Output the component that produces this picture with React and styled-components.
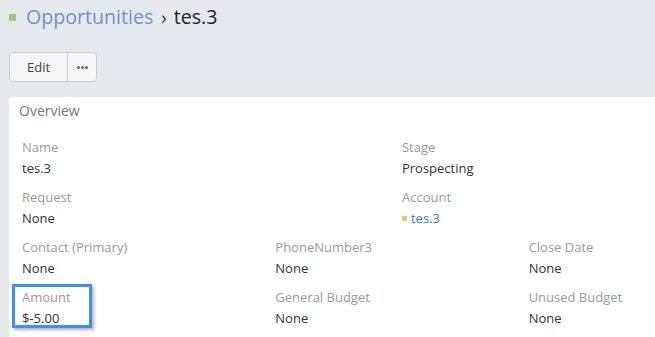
import React from 'react';
import styled, { createGlobalStyle } from 'styled-components';

const GlobalStyle = createGlobalStyle`
  html, body {
    margin: 0;
    padding: 0;
    background: #e6e9ec;
    overflow: hidden;
  }
  body {
    font-family: "Open Sans", "Liberation Sans", sans-serif;
    color: #333;
  }
`;

const Page = styled.div`
  padding: 4px 0 0 9px;
  width: 800px;
`;

const TitleBar = styled.h1`
  display: flex;
  align-items: center;
  margin: 0;
  height: 26px;
  font-size: 19.6px;
  font-weight: 400;
  line-height: 26px;
`;

const Marker = styled.span`
  display: inline-block;
  width: ${props => props.size}px;
  height: ${props => props.size}px;
  background: ${props => props.color};
  margin-right: ${props => props.gap}px;
  flex: none;
`;

const Crumb = styled.a`
  color: #6a93cf;
  text-decoration: none;
`;

const Sep = styled.span`
  color: #333;
  margin: 0 7px 0 8px;
  font-size: 18px;
`;

const Current = styled.span`
  color: #222;
`;

const Toolbar = styled.div`
  display: flex;
  margin-top: 22px;
`;

const ButtonGroup = styled.div`
  display: flex;
  height: 30px;
  border: 1px solid #c9cbcd;
  border-radius: 4px;
  background: #f6f6f6;
  box-sizing: border-box;
  overflow: hidden;
`;

const Button = styled.button`
  display: flex;
  align-items: center;
  justify-content: center;
  width: ${props => props.width}px;
  height: 100%;
  padding: 0;
  border: none;
  border-left: ${props => (props.divider ? '1px solid #c9cbcd' : 'none')};
  background: transparent;
  font-family: inherit;
  font-size: 13px;
  color: #444;
`;

const Dots = styled.span`
  display: flex;
  gap: 1px;
  span {
    width: 3px;
    height: 3px;
    border-radius: 50%;
    background: #666;
  }
`;

const Panel = styled.section`
  margin-top: 15px;
  width: 790px;
  background: #fff;
  border-radius: 4px 0 0 0;
  padding-bottom: 20px;
`;

const PanelTitle = styled.div`
  padding: 4px 10px 0;
  font-size: 14px;
  line-height: 20px;
  color: #777;
`;

const FieldGrid = styled.div`
  display: grid;
  grid-template-columns: repeat(6, 126.666px);
  row-gap: 9px;
  margin-top: 16px;
  padding: 0 3px;
`;

const Field = styled.div`
  position: relative;
  grid-column: span ${props => props.span};
  padding-left: 10px;

  ${props =>
    props.highlighted &&
    `
    &::after {
      content: '';
      position: absolute;
      left: 0;
      top: -3px;
      width: 80px;
      height: 44px;
      box-sizing: border-box;
      border: 3px solid #3f8ff0;
      box-shadow: 2px 2px 3px rgba(0, 0, 0, 0.3);
      pointer-events: none;
    }
  `}
`;

const Label = styled.div`
  font-size: 13px;
  line-height: 20px;
  color: #9a9a9a;
`;

const Value = styled.div`
  display: flex;
  align-items: center;
  margin-top: 1px;
  font-size: 13px;
  line-height: 20px;
  color: ${props => (props.link ? '#3b7fc4' : '#333')};
`;

const fields = [
  { label: 'Name', value: 'tes.3', span: 3 },
  { label: 'Stage', value: 'Prospecting', span: 3 },
  { label: 'Request', value: 'None', span: 3 },
  { label: 'Account', value: 'tes.3', span: 3, link: true },
  { label: 'Contact (Primary)', value: 'None', span: 2 },
  { label: 'PhoneNumber3', value: 'None', span: 2 },
  { label: 'Close Date', value: 'None', span: 2 },
  { label: 'Amount', value: '$-5.00', span: 2, highlighted: true },
  { label: 'General Budget', value: 'None', span: 2 },
  { label: 'Unused Budget', value: 'None', span: 2 },
];

const App = () => {
  return (
    <>
      <GlobalStyle />
      <Page>
        <TitleBar>
          <Marker size={7} color="#9bcb7b" gap={10} />
          <Crumb href="#">Opportunities</Crumb>
          <Sep>›</Sep>
          <Current>tes.3</Current>
        </TitleBar>

        <Toolbar>
          <ButtonGroup>
            <Button width={57}>Edit</Button>
            <Button width={29} divider>
              <Dots>
                <span />
                <span />
                <span />
              </Dots>
            </Button>
          </ButtonGroup>
        </Toolbar>

        <Panel>
          <PanelTitle>Overview</PanelTitle>
          <FieldGrid>
            {fields.map(f => (
              <Field key={f.label} span={f.span} highlighted={f.highlighted}>
                <Label>{f.label}</Label>
                <Value link={f.link}>
                  {f.link && <Marker size={5} color="#f0c75a" gap={4} />}
                  {f.value}
                </Value>
              </Field>
            ))}
          </FieldGrid>
        </Panel>
      </Page>
    </>
  );
};

export default App;
